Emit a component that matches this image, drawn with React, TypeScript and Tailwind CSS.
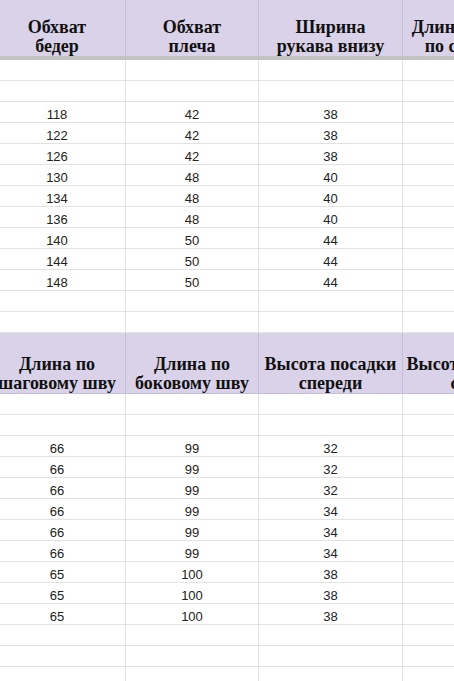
const grid = "grid grid-cols-[137px_133px_144px_140px] -ml-[11px] w-max";

const hips = [
  [118, 42, 38],
  [122, 42, 38],
  [126, 42, 38],
  [130, 48, 40],
  [134, 48, 40],
  [136, 48, 40],
  [140, 50, 44],
  [144, 50, 44],
  [148, 50, 44],
];

const legs = [
  [66, 99, 32],
  [66, 99, 32],
  [66, 99, 32],
  [66, 99, 34],
  [66, 99, 34],
  [66, 99, 34],
  [65, 100, 38],
  [65, 100, 38],
  [65, 100, 38],
];

const HeadCell = ({ lines, tall }: { lines: string[]; tall?: boolean }) => (
  <div
    className={
      (tall ? "h-[61px] border-b border-[#bcb6c9] " : "h-[56px] ") +
      "flex flex-col items-center justify-end bg-[#d9d2e9] border-r border-[#c6bed8] text-[18px] leading-[19px] font-bold text-[#111] whitespace-nowrap"
    }
  >
    {lines.map((l) => (
      <span key={l}>{l}</span>
    ))}
  </div>
);

const Row = ({ cells }: { cells: (number | string)[] }) => (
  <>
    {cells.map((c, i) => (
      <div
        key={i}
        className="h-[21px] flex items-end justify-center border-r border-b border-[#e2e2e2] text-[13px] leading-[13px] text-[#222] pb-[1px]"
      >
        {c}
      </div>
    ))}
  </>
);

export default function App() {
  return (
    <div
      className="w-[454px] h-[681px] overflow-hidden bg-white"
      style={{ fontFamily: "'Liberation Sans', Arial, sans-serif" }}
    >
      <div className={grid} style={{ fontFamily: "'Liberation Serif', 'Times New Roman', serif" }}>
        <HeadCell lines={["Обхват", "бедер"]} />
        <HeadCell lines={["Обхват", "плеча"]} />
        <HeadCell lines={["Ширина", "рукава внизу"]} />
        <HeadCell lines={["Длина изделия", "по середине"]} />
      </div>
      <div className="h-[4px] w-full bg-[#c3c3c3]" />
      <div className={grid}>
        <Row cells={["", "", "", ""]} />
        <Row cells={["", "", "", ""]} />
        {hips.map((r, i) => (
          <Row key={i} cells={[...r, ""]} />
        ))}
        <Row cells={["", "", "", ""]} />
        <Row cells={["", "", "", ""]} />
      </div>
      <div className={grid} style={{ fontFamily: "'Liberation Serif', 'Times New Roman', serif" }}>
        <HeadCell tall lines={["Длина по", "шаговому шву"]} />
        <HeadCell tall lines={["Длина по", "боковому шву"]} />
        <HeadCell tall lines={["Высота посадки", "спереди"]} />
        <HeadCell tall lines={["Высота посадки", "сзади"]} />
      </div>
      <div className={grid}>
        <Row cells={["", "", "", ""]} />
        <Row cells={["", "", "", ""]} />
        {legs.map((r, i) => (
          <Row key={i} cells={[...r, ""]} />
        ))}
        <Row cells={["", "", "", ""]} />
        <Row cells={["", "", "", ""]} />
        <Row cells={["", "", "", ""]} />
      </div>
    </div>
  );
}
